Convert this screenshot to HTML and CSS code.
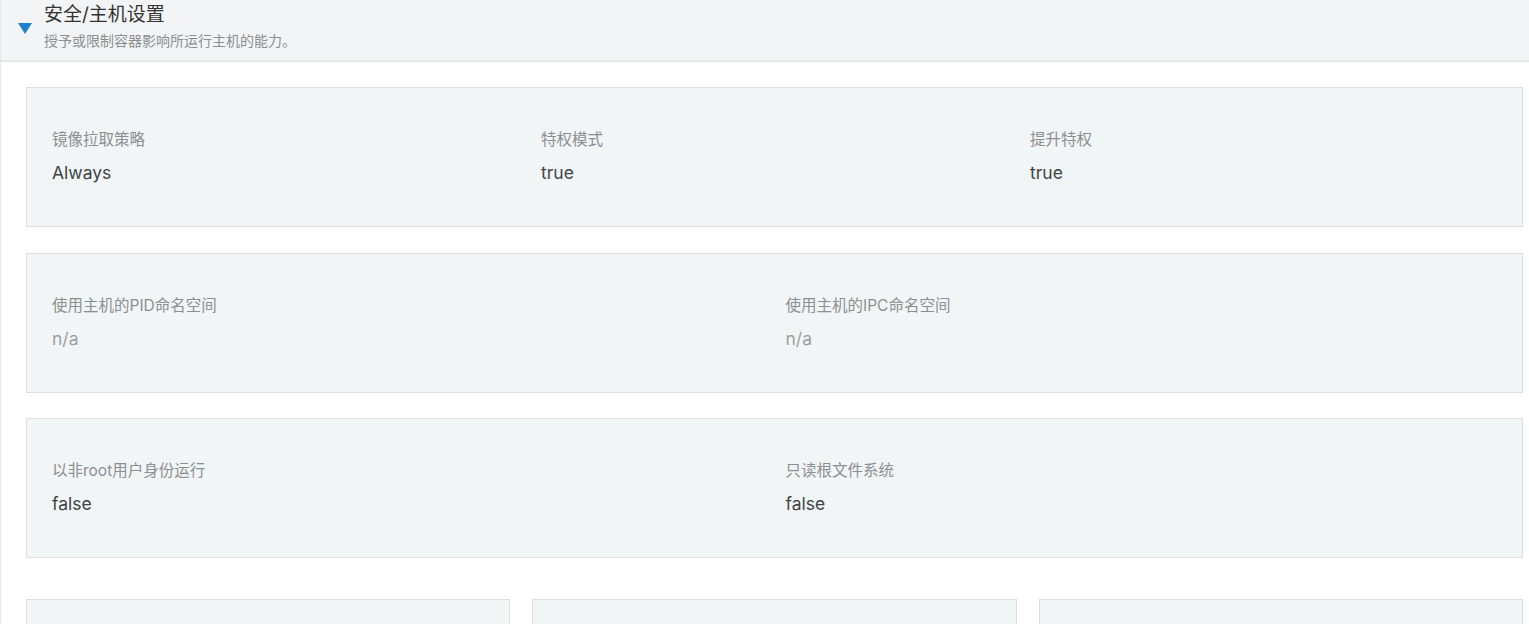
FILE: index.html
```html
<!DOCTYPE html>
<html lang="zh">
<head>
<meta charset="utf-8">
<link rel="stylesheet" href="styles.css">
</head>
<body>
<div class="page">
  <div class="accordion-header">
    <span class="caret"></span>
    <div class="heading">
      <div class="title">安全/主机设置</div>
      <div class="subtitle">授予或限制容器影响所运行主机的能力。</div>
    </div>
  </div>
  <div class="content">
    <div class="box cols-3">
      <div class="field"><div class="label">镜像拉取策略</div><div class="value">Always</div></div>
      <div class="field"><div class="label">特权模式</div><div class="value">true</div></div>
      <div class="field"><div class="label">提升特权</div><div class="value">true</div></div>
    </div>
    <div class="box cols-2">
      <div class="field"><div class="label">使用主机的PID命名空间</div><div class="value muted">n/a</div></div>
      <div class="field"><div class="label">使用主机的IPC命名空间</div><div class="value muted">n/a</div></div>
    </div>
    <div class="box cols-2">
      <div class="field"><div class="label">以非root用户身份运行</div><div class="value">false</div></div>
      <div class="field"><div class="label">只读根文件系统</div><div class="value">false</div></div>
    </div>
    <div class="cards">
      <div class="card"></div>
      <div class="card"></div>
      <div class="card"></div>
    </div>
  </div>
</div>
</body>
</html>
```
FILE: styles.css
```css
html, body {
  margin: 0;
  padding: 0;
  background: #ffffff;
  height: 100%;
  overflow: hidden;
}
body {
  font-family: "Inter", "Noto Sans CJK SC", sans-serif;
  color: #333;
}
.page {
  border-left: 1px solid #e6e8e8;
  min-height: 100%;
  box-sizing: border-box;
}
.accordion-header {
  display: flex;
  align-items: flex-start;
  height: 62px;
  box-sizing: border-box;
  background: #f2f4f5;
  border-bottom: 1px solid #dfe3e3;
  box-shadow: inset 0 -3px 0 -2px #e9ecec;
  padding-left: 17px;
}
.caret {
  width: 0;
  height: 0;
  margin-top: 23px;
  border-left: 7px solid transparent;
  border-right: 7px solid transparent;
  border-top: 11px solid #1f7fd0;
  flex: none;
}
.heading {
  margin-left: 12px;
  padding-top: 3px;
}
.title {
  font-size: 19px;
  line-height: 24px;
  color: #333;
}
.subtitle {
  font-size: 14px;
  line-height: 20px;
  margin-top: 4px;
  color: #8a8f93;
}
.content {
  padding: 25px 6px 0 25px;
  display: flex;
  flex-direction: column;
}
.box {
  display: grid;
  height: 140px;
  box-sizing: border-box;
  background: #f2f5f5;
  border: 1px solid #dcdfdf;
  padding: 42px 3px 0 25px;
  margin-bottom: 25.5px;
}
.cols-3 { grid-template-columns: repeat(3, 1fr); }
.cols-2 { grid-template-columns: repeat(2, 1fr); }
.label {
  font-size: 15.5px;
  line-height: 20px;
  color: #8a8f93;
}
.value {
  font-size: 17.5px;
  line-height: 24px;
  margin-top: 11px;
  color: #404347;
}
.value.muted { color: #9a9fa3; }
.cards {
  margin-top: 15.5px;
  display: grid;
  grid-template-columns: repeat(3, 1fr);
  gap: 22px;
}
.card {
  height: 60px;
  background: #f2f5f5;
  border: 1px solid #dcdfdf;
}
```
